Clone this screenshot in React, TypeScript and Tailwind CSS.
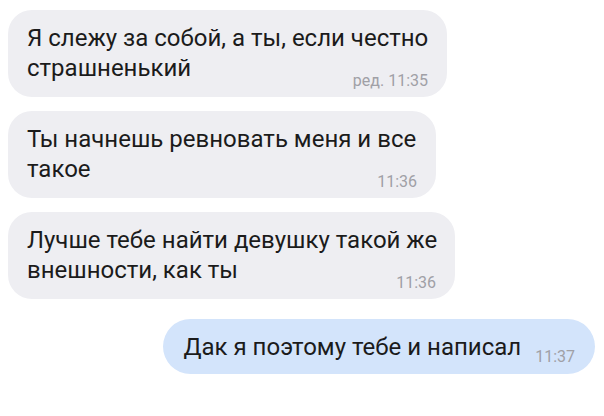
const messages = [
  { text: "Я слежу за собой, а ты, если честно страшненький", time: "ред. 11:35", w: "w-[439px]" },
  { text: "Ты начнешь ревновать меня и все такое", time: "11:36", w: "w-[428px]" },
  { text: "Лучше тебе найти девушку такой же внешности, как ты", time: "11:36", w: "w-[447px]" },
];

export default function App() {
  return (
    <div className="w-[604px] h-[416px] bg-white font-['Roboto',sans-serif] flex flex-col pt-[10px] px-[8px]">
      <div className="flex flex-col gap-[14px]">
        {messages.map((m, i) => (
          <div
            key={i}
            className={`${m.w} h-[87px] rounded-[24px] bg-[#eeeef2] pl-[19px] pr-[12px] pt-[13px] flex flex-col`}
          >
            <p className="text-[24px] leading-[30px] text-[#1b1b1b]">{m.text}</p>
            <span className="self-end -mt-[10px] mr-[7px] text-[16px] leading-[16px] text-[#a0a0a6]">{m.time}</span>
          </div>
        ))}
      </div>
      <div className="flex justify-end mt-[20px] pr-[1px]">
        <div className="h-[55px] rounded-[28px] bg-[#d3e4fb] pl-[20px] pr-[20px] flex items-center gap-[14px]">
          <span className="text-[24px] leading-[30px] text-[#1b1b1b]">Дак я поэтому тебе и написал</span>
          <span className="text-[16px] leading-[16px] text-[#a0a0a6] mt-[20px]">11:37</span>
        </div>
      </div>
    </div>
  );
}
